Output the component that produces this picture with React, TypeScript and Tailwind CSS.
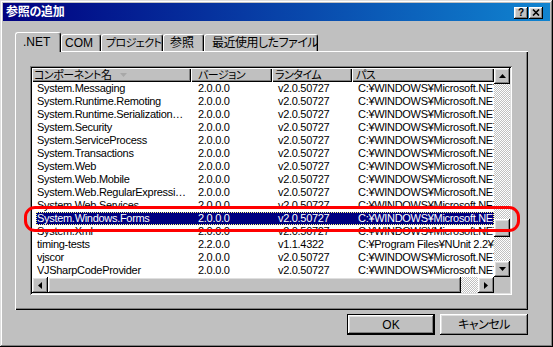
import React from "react";

// classic 3D edges
const raised =
  "shadow-[inset_-1px_-1px_#000,inset_1px_1px_#fff,inset_-2px_-2px_#808080,inset_2px_2px_#dfdfdf]";
const headerEdge =
  "shadow-[inset_1px_1px_#fff,inset_-1px_-1px_#000,inset_-2px_-2px_#808080]";
const checker =
  "bg-[image:repeating-conic-gradient(#c0c0c0_0%_25%,#ffffff_0%_50%)] bg-[length:2px_2px]";

type Row = [string, string, string, string];

const fx = "C:¥WINDOWS¥Microsoft.NET¥Framework¥v2.0.50727¥";

const rows: Row[] = [
  ["System.Messaging", "2.0.0.0", "v2.0.50727", fx + "System.Messaging.dll"],
  ["System.Runtime.Remoting", "2.0.0.0", "v2.0.50727", fx + "System.Runtime.Remoting.dll"],
  ["System.Runtime.Serialization…", "2.0.0.0", "v2.0.50727", fx + "System.Runtime.Serialization.Formatters.Soap.dll"],
  ["System.Security", "2.0.0.0", "v2.0.50727", fx + "System.Security.dll"],
  ["System.ServiceProcess", "2.0.0.0", "v2.0.50727", fx + "System.ServiceProcess.dll"],
  ["System.Transactions", "2.0.0.0", "v2.0.50727", fx + "System.Transactions.dll"],
  ["System.Web", "2.0.0.0", "v2.0.50727", fx + "System.Web.dll"],
  ["System.Web.Mobile", "2.0.0.0", "v2.0.50727", fx + "System.Web.Mobile.dll"],
  ["System.Web.RegularExpressi…", "2.0.0.0", "v2.0.50727", fx + "System.Web.RegularExpressions.dll"],
  ["System.Web.Services", "2.0.0.0", "v2.0.50727", fx + "System.Web.Services.dll"],
  ["System.Windows.Forms", "2.0.0.0", "v2.0.50727", fx + "System.Windows.Forms.dll"],
  ["System.Xml", "2.0.0.0", "v2.0.50727", fx + "System.XML.dll"],
  ["timing-tests", "2.2.0.0", "v1.1.4322", "C:¥Program Files¥NUnit 2.2¥bin¥timing-tests.dll"],
  ["vjscor", "2.0.0.0", "v2.0.50727", fx + "vjscor.dll"],
  ["VJSharpCodeProvider", "2.0.0.0", "v2.0.50727", fx + "VJSharpCodeProvider.dll"],
];

const SELECTED = 10;

const tabs = [
  { label: ".NET", w: "w-[46px]", pl: "pl-[7px]", text: "text-[12px]" },
  { label: "COM", w: "w-[40px]", pl: "pl-[3px]", text: "text-[12px]" },
  { label: "プロジェクト", w: "w-[62px]", pl: "pl-[4px]", text: "text-[11px] tracking-[-0.6px]" },
  { label: "参照", w: "w-[41px]", pl: "pl-[6px]", text: "text-[12px]" },
  { label: "最近使用したファイル", w: "w-[114px]", pl: "pl-[7px]", text: "text-[12px] tracking-[-0.5px]" },
];

function Arrow({ dir }: { dir: "up" | "down" | "left" | "right" }) {
  if (dir === "up" || dir === "down") {
    const pts = dir === "up" ? "3.5,0 7,4 0,4" : "0,0 7,0 3.5,4";
    return (
      <svg width="7" height="4" viewBox="0 0 7 4">
        <polygon points={pts} fill="#000" />
      </svg>
    );
  }
  const pts = dir === "left" ? "4,0 4,7 0,3.5" : "0,0 4,3.5 0,7";
  return (
    <svg width="4" height="7" viewBox="0 0 4 7">
      <polygon points={pts} fill="#000" />
    </svg>
  );
}

function ScrollButton({ dir }: { dir: "up" | "down" | "left" | "right" }) {
  return (
    <div
      className={`w-[16px] h-[16px] shrink-0 bg-[#c0c0c0] ${raised} flex items-center justify-center`}
    >
      <Arrow dir={dir} />
    </div>
  );
}

function ListView() {
  return (
    <div className="w-[482px] h-[229px] p-[2px] bg-white shadow-[inset_1px_1px_#808080,inset_-1px_-1px_#fff,inset_2px_2px_#000,inset_-2px_-2px_#dfdfdf]">
      <div className="flex flex-col h-full">
        <div className="flex flex-1 min-h-0">
          <div className="flex-1 min-w-0 overflow-hidden bg-white text-[11px] tracking-[-0.3px]">
            {/* header */}
            <div className="grid grid-cols-[159px_81px_80px_1fr] h-[14px] leading-[14px] bg-[#c0c0c0]">
              <div className={`${headerEdge} pl-[2px] flex items-center gap-[9px] overflow-hidden whitespace-nowrap tracking-[-0.5px]`}>
                <span>コンポーネント名</span>
                <svg width="7" height="4" viewBox="0 0 7 4">
                  <polygon points="0,0 7,0 3.5,4" fill="#a8a8a8" />
                </svg>
              </div>
              <div className={`${headerEdge} pl-[7px] overflow-hidden whitespace-nowrap tracking-[-0.5px]`}>
                バージョン
              </div>
              <div className={`${headerEdge} pl-[3px] overflow-hidden whitespace-nowrap tracking-[-0.5px]`}>
                ランタイム
              </div>
              <div className={`${headerEdge} pl-[4px] overflow-hidden whitespace-nowrap tracking-[-0.5px]`}>
                パス
              </div>
            </div>

            {/* rows */}
            {rows.map((r, i) => {
              const sel = i === SELECTED;
              return (
                <div key={r[0]} className="flex h-[13px] leading-[13px]">
                  <div className="w-[4px] shrink-0" />
                  <div
                    className={`flex-1 grid grid-cols-[155px_81px_80px_1fr] ${
                      sel
                        ? "bg-[#000080] text-white outline outline-1 outline-dotted outline-[#ffff80] -outline-offset-1"
                        : "text-black"
                    }`}
                  >
                    <div className="pl-[1px] overflow-hidden whitespace-nowrap">{r[0]}</div>
                    <div className="pl-[7px] overflow-hidden whitespace-nowrap">{r[1]}</div>
                    <div className="pl-[6px] overflow-hidden whitespace-nowrap">{r[2]}</div>
                    <div className="pl-[6px] overflow-hidden whitespace-nowrap">{r[3]}</div>
                  </div>
                </div>
              );
            })}
          </div>

          {/* vertical scrollbar */}
          <div className="w-[16px] shrink-0 flex flex-col">
            <ScrollButton dir="up" />
            <div className={`h-[135px] ${checker}`} />
            <div className={`h-[18px] bg-[#c0c0c0] ${raised}`} />
            <div className={`flex-1 ${checker}`} />
            <ScrollButton dir="down" />
          </div>
        </div>

        {/* horizontal scrollbar */}
        <div className="flex h-[16px] shrink-0">
          <div className="flex flex-1">
            <ScrollButton dir="left" />
            <div className={`w-[413px] bg-[#c0c0c0] ${raised}`} />
            <div className={`flex-1 ${checker}`} />
            <ScrollButton dir="right" />
          </div>
          <div className="w-[16px] bg-[#c0c0c0]" />
        </div>
      </div>
    </div>
  );
}

export default function App() {
  return (
    <div className="relative w-[553px] h-[347px] bg-[#c0c0c0] p-[3px] font-['Liberation_Sans','Noto_Sans_CJK_JP',sans-serif] text-[11px] text-black [font-feature-settings:'palt'] shadow-[inset_-1px_-1px_#000,inset_1px_1px_#dfdfdf,inset_-2px_-2px_#808080,inset_2px_2px_#fff]">
      {/* title bar */}
      <div className="h-[18px] flex items-center justify-between pl-[3px] pr-[7px] bg-[linear-gradient(to_right,#000080,#1084d0)]">
        <span className="text-white text-[12px] font-bold tracking-[-0.3px]">参照の追加</span>
        <div className="flex gap-[1px] mt-[1px]">
          <div className={`w-[14px] h-[12px] bg-[#c0c0c0] ${raised} flex items-center justify-center`}>
            <span className="text-[10px] font-bold leading-none mt-[1px]">?</span>
          </div>
          <div className={`w-[14px] h-[12px] bg-[#c0c0c0] ${raised} flex items-center justify-center`}>
            <svg width="8" height="7" viewBox="0 0 8 7">
              <path d="M1 0.5 L7 6.5 M7 0.5 L1 6.5" stroke="#000" strokeWidth="1.6" />
            </svg>
          </div>
        </div>
      </div>

      {/* tabs + panel */}
      <div className="ml-[12px] mt-[11px] w-[513px]">
        <div className="flex items-end h-[19px]">
          {tabs.map((t, i) => {
            const active = i === 0;
            return (
              <div
                key={t.label}
                className={`${t.w} ${t.pl} ${t.text} ${
                  active ? "h-[20px] -mb-px relative z-10 pt-[3px]" : "h-[17px] pt-[2px]"
                } bg-[#c0c0c0] border-t border-l border-white border-r border-r-black rounded-t-[3px] shadow-[inset_-1px_0_#808080] whitespace-nowrap overflow-hidden leading-[13px]`}
              >
                {t.label}
              </div>
            );
          })}
        </div>
        <div className="h-[259px] pt-[15px] pl-[15px] shadow-[inset_1px_1px_#fff,inset_-1px_-1px_#000,inset_-2px_-2px_#808080]">
          <ListView />
        </div>
      </div>

      {/* buttons */}
      <div className="flex justify-end gap-[5px] mt-[4px] mr-[22px]">
        <div className="w-[88px] h-[21px] border border-black">
          <div className={`w-full h-full ${raised} flex items-center justify-center text-[12px]`}>
            OK
          </div>
        </div>
        <div className={`w-[88px] h-[21px] ${raised} flex items-center justify-center text-[12px] tracking-[-0.5px]`}>
          キャンセル
        </div>
      </div>

      {/* red annotation */}
      <div className="absolute left-[24px] top-[206px] w-[496px] h-[26px] border-[3px] border-[#ff0000] rounded-[11px] pointer-events-none" />
    </div>
  );
}
